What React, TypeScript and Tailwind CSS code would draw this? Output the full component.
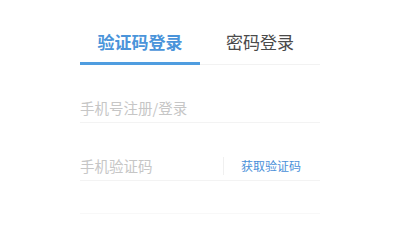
import { useState } from 'react';

export default function App() {
  const [tab, setTab] = useState<'code' | 'password'>('code');

  const tabs = [
    { key: 'code' as const, label: '验证码登录' },
    { key: 'password' as const, label: '密码登录' },
  ];

  return (
    <div className="w-[400px] h-[216px] bg-white overflow-hidden font-['Noto_Sans_CJK_SC','Noto_Sans',sans-serif]">
      <div className="w-[240px] mx-auto pt-[24px]">
        {/* Tabs */}
        <div className="flex border-b border-[#f2f2f2]">
          {tabs.map((t) => {
            const active = tab === t.key;
            return (
              <button
                key={t.key}
                onClick={() => setTab(t.key)}
                className={`flex-1 h-[41px] -mb-px pb-[4px] flex items-center justify-center text-[17px] leading-none border-b-[3px] ${
                  active ? 'border-[#4f9de0] text-[#4a94da] font-bold' : 'border-transparent text-[#4a4a4a]'
                }`}
              >
                {t.label}
              </button>
            );
          })}
        </div>

        {/* Phone */}
        <div className="h-[58px] flex items-end pb-[4px] border-b border-[#f3f3f3]">
          <input
            className="w-full h-[20px] text-[14.5px] outline-none placeholder:text-[#c6c6c6]"
            placeholder="手机号注册/登录"
          />
        </div>

        {/* Code */}
        <div className="h-[58px] flex items-end pb-[4px] border-b border-[#f3f3f3]">
          <input
            className="flex-1 min-w-0 h-[20px] text-[14.5px] outline-none placeholder:text-[#c6c6c6]"
            placeholder="手机验证码"
          />
          <div className="w-px h-[18px] bg-[#f0f0f0] mb-px" />
          <button className="ml-[17px] mr-[19px] h-[20px] text-[12px] text-[#4a90d9] leading-[20px]">获取验证码</button>
        </div>

        <div className="h-[33px] border-b border-[#f8f8f8]" />
      </div>
    </div>
  );
}
